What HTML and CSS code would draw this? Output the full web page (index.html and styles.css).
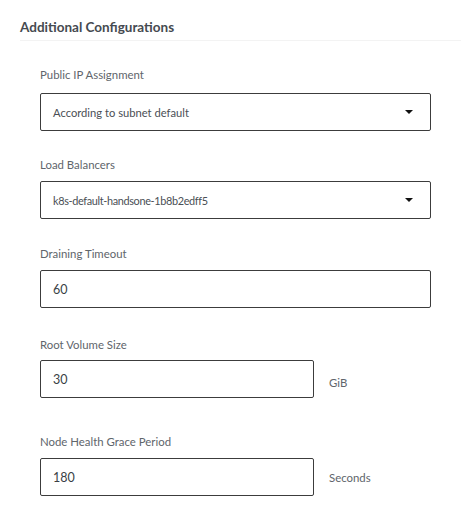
FILE: index.html
```html
<!DOCTYPE html>
<html>
<head>
<meta charset="utf-8">
<link rel="stylesheet" href="styles.css">
</head>
<body>
<div class="panel">
  <div class="panel-header">Additional Configurations</div>
  <div class="panel-body">
    <div class="field f1">
      <div class="label">Public IP Assignment</div>
      <div class="box select full">
        <span class="value">According to subnet default</span>
        <span class="caret"></span>
      </div>
    </div>
    <div class="field f2">
      <div class="label">Load Balancers</div>
      <div class="box select full">
        <span class="value mono">k8s-default-handsone-1b8b2edff5</span>
        <span class="caret"></span>
      </div>
    </div>
    <div class="field f3">
      <div class="label">Draining Timeout</div>
      <div class="box full">
        <span class="value num">60</span>
      </div>
    </div>
    <div class="field f4">
      <div class="label">Root Volume Size</div>
      <div class="row">
        <div class="box short">
          <span class="value num">30</span>
        </div>
        <span class="unit">GiB</span>
      </div>
    </div>
    <div class="field f5">
      <div class="label">Node Health Grace Period</div>
      <div class="row">
        <div class="box short">
          <span class="value num">180</span>
        </div>
        <span class="unit">Seconds</span>
      </div>
    </div>
  </div>
</div>
</body>
</html>
```

FILE: styles.css
```css
html, body {
  margin: 0;
  padding: 0;
  background: #ffffff;
}
body {
  font-family: "Lato", "Open Sans", sans-serif;
  color: #333;
}
.panel-header {
  margin-left: 20px;
  padding-top: 18px;
  height: 22px;
  font-size: 13.5px;
  line-height: 18px;
  font-weight: 700;
  color: #454a50;
  border-bottom: 1px solid #f3f3f3;
}
.panel-body {
  padding-left: 40px;
}
.field {
  display: flex;
  flex-direction: column;
}
.label {
  font-size: 11.4px;
  line-height: 16px;
  color: #60656b;
}
.f1 { padding-top: 26px; }
.f2 { padding-top: 26px; }
.f3 { padding-top: 27px; }
.f4 { padding-top: 29px; }
.f5 { padding-top: 36px; }
.f1 .label { margin-bottom: 10px; }
.f2 .label { margin-bottom: 8px; }
.f3 .label { margin-bottom: 8px; }
.f4 .label { margin-bottom: 7px; }
.f5 .label { margin-bottom: 8px; }
.box {
  box-sizing: border-box;
  height: 38px;
  border: 1px solid #3c3c3c;
  border-radius: 2px;
  display: flex;
  align-items: center;
  padding-left: 12px;
  padding-right: 17px;
}
.full { width: 391px; }
.short { width: 274px; }
.select { justify-content: space-between; }
.value {
  font-size: 11.2px;
  color: #4a4f55;
}
.mono {
  font-size: 10.9px;
  letter-spacing: -0.35px;
}
.num {
  font-size: 12.5px;
  color: #3a3f45;
}
.caret {
  width: 0;
  height: 0;
  border-left: 4px solid transparent;
  border-right: 4px solid transparent;
  border-top: 4px solid #111;
}
.row {
  display: flex;
  align-items: center;
}
.unit {
  margin-left: 15px;
  font-size: 11.4px;
  color: #60656b;
}
.f4 .unit { margin-top: 6px; }
.f5 .unit { margin-top: 1px; }
```
